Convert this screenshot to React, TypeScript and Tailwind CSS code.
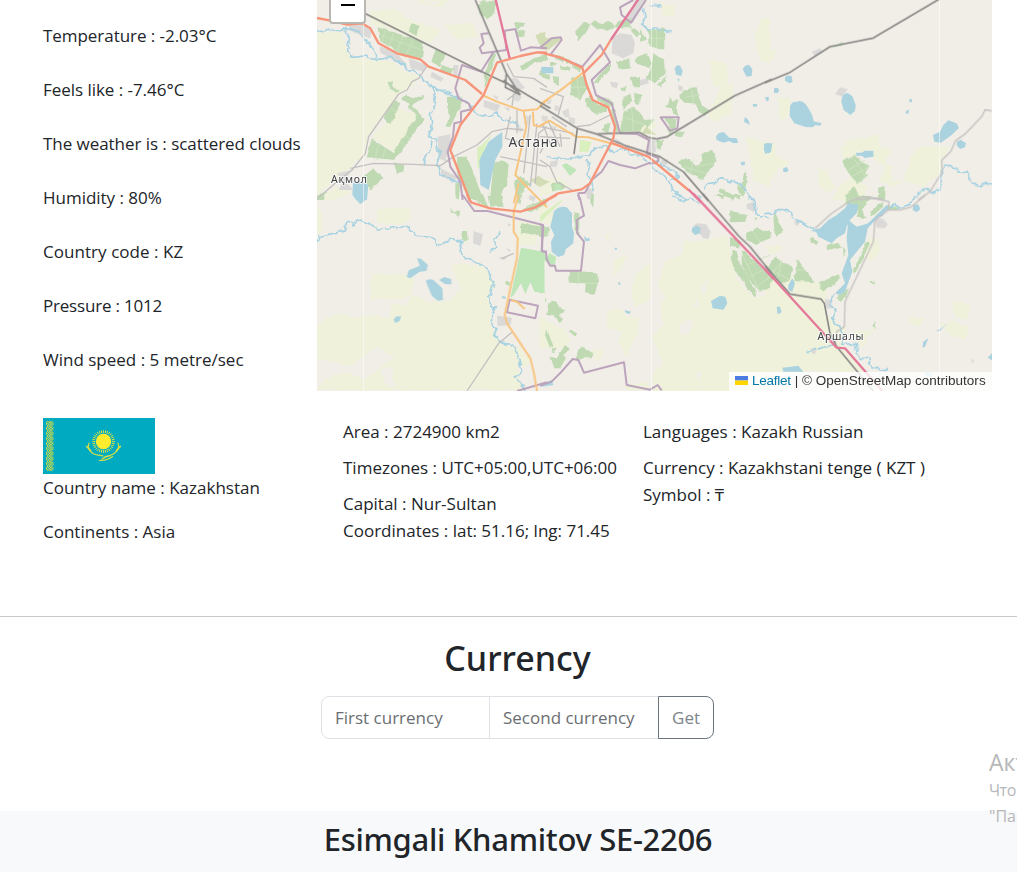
import React from "react";

type Shape = [tile: number, d: string];

// Each tile draws in its own 3x unit space, placed on the map by its origin.
const ORIGINS = [
  [317, 0],
  [540, 0],
  [765, 0],
  [317, 195],
  [540, 195],
  [765, 195],
];

const FARM: Shape[] = [
  [0, "M0 96L75 96 100 172 230 185 262 215 310 228 296 248 240 290 158 402 140 465 90 510 40 545 0 590Z"],
  [0, "M160 35L230 25 275 60 370 90 340 130 230 90 160 75ZM380 75L470 70 480 110 420 120ZM300 0H400L380 20 310 12ZM210 235L260 225 290 240 250 280 220 280Z"],
  [0, "M165 410L215 360 245 325 305 345 235 460Z"],
  [0, "M0 590L60 560 105 575 60 600H0Z"],
  [1, "M360 10L405 20 400 50 370 45ZM660 60L690 50V110H650ZM510 180L560 185 565 250 520 260ZM640 90L690 95V190L660 180ZM545 255L580 250 575 340 520 365 505 345ZM300 350L350 370 340 400 300 405ZM620 410L690 430V560L640 540ZM0 540L60 530 90 560 40 575 0 590Z"],
  [2, "M10 140L32 150 28 180 5 175ZM40 290L75 300 75 345 45 365ZM0 440L30 430 35 465 75 490 40 510 15 540 0 545ZM225 440L260 415 310 415 345 400 345 440 380 445 360 490 385 500 375 540 420 545 380 560 345 545 360 500 320 470 290 455 235 480ZM450 445L500 440 560 440 530 480 530 520 470 560 415 540ZM160 500L185 510 200 545 215 560 190 580 160 550ZM220 560L260 530 310 560 290 600H200Z"],
  [3, "M0 35L18 60 16 110 0 120ZM180 45L220 38 280 40 285 75 240 90 180 80ZM162 236L258 238 292 250 285 300 258 312 162 312Z"],
  [3, "M405 210L440 205 500 215 535 265 515 300 520 350 525 400 545 440 600 500 605 545 620 585H0L30 550 90 530 140 555 190 515 235 485 180 455 100 515 0 490V390L60 355 120 370 160 360 215 370 225 330 270 330 285 300 340 320 400 318 430 280Z"],
  [3, "M535 420L555 445 600 465 605 450 640 500 620 520 590 490 545 450ZM600 75L670 90 660 150 600 150Z"],
  [4, "M375 200L430 175 430 140 500 135 560 120 570 180 590 250 640 310 690 300V588H335L340 530 370 510 350 460 335 430 370 390 360 350 375 300 355 270Z"],
  [4, "M225 195L260 175 245 225 220 240ZM290 230L330 205 330 310 280 335 275 290ZM200 350L240 340 270 370 300 370 295 405 260 490 235 440 245 410 200 395ZM20 30L45 60 30 90 0 80V35ZM0 365L40 390 70 400 90 440 70 460 0 460ZM195 115L215 125 205 140ZM155 465L185 465 190 485 165 500ZM255 570L320 560 330 585H260Z"],
  [5, "M0 200L40 235 150 260 190 270 180 360 240 400 230 450 300 530H0ZM310 130L342 135 340 175 320 200 300 190ZM0 155L50 150 50 170 20 180ZM240 0H295L260 25 230 30ZM430 365L480 370 465 395 435 385ZM560 320L615 325 610 370 570 370ZM525 385L570 380 610 395 605 430 560 425ZM260 410L330 400 290 460Z"],
];
const LAND: Shape[] = [
  [3, "M190 525L215 515 230 525 225 555 240 570 225 580 205 560ZM90 515L140 495 175 520 140 550Z"],
  [4, "M420 395L445 370 460 380 450 415 425 420ZM465 340L475 325 470 310 460 330ZM480 280L505 245 495 300ZM465 540L485 530 480 560Z"],
  [0, "M320 0L370 5 355 15 325 10Z"],
];
const GREEN: Shape[] = [
  [0, "M182 82L320 125 315 178 268 170 188 122ZM282 68L308 78 298 105 275 98ZM355 148L385 160 370 200 343 185ZM375 195L410 208 400 225 368 212ZM215 250L228 242 225 262 248 272 240 282 215 265ZM232 300L250 310 240 330 235 350 220 372 200 352ZM268 280L285 295 320 285 322 292 280 318 253 298ZM300 345L308 338 323 355 240 472 228 462ZM280 316L308 340 300 348 272 322ZM165 418L240 465 235 480 148 472ZM170 505L200 535 160 570 138 530ZM230 490L260 495 262 515 240 520ZM0 590L30 575 20 600H0Z"],
  [0, "M485 10L540 0 535 40 510 58 490 42ZM590 65L625 70 600 95ZM595 95L625 92 620 110 600 112ZM390 290L430 290 435 320 420 340 400 380 385 380 400 345 390 320ZM530 150L540 165 515 225 500 225ZM420 470L450 470 500 600H455L420 520ZM530 490L555 478 575 490 570 560 545 590 520 590ZM590 540L610 525 640 550 600 600ZM610 200L640 178 690 165V180L650 190 615 212ZM490 0L510 2 500 20ZM415 550L430 548 425 600 415 588ZM500 225L520 230 505 262Z"],
  [1, "M105 95L135 62 150 75 140 95 115 125ZM152 72L165 60 182 72 208 62 225 75 245 60 272 55 275 85 245 85 225 78 200 92 170 88ZM280 80L300 100 290 112 273 92ZM325 88L373 82 373 145 340 145 325 130ZM230 185L268 175 270 205 238 210ZM300 90L320 120 300 125ZM290 172L320 158 335 185 328 205 288 190ZM340 160L372 180 375 220 345 250 320 235 335 200ZM93 235L130 230 145 265 120 300 92 280ZM138 300L150 290 175 312 205 310 200 335 172 342 140 322ZM160 245L210 190 210 210 175 250ZM165 285L215 300 238 385 228 398 212 320 172 300ZM272 230L300 230 300 262 280 262ZM250 290L272 282 276 305 250 330ZM282 275L308 285 295 312 285 305ZM248 335L285 318 320 365 300 392 240 395ZM318 360L340 358 325 382 308 370ZM240 265L260 260 255 275ZM350 255L365 240 380 225 378 240 362 258Z"],
  [1, "M372 352L412 355 410 380 395 395ZM435 268L470 265 485 318 510 330 490 348 460 310 430 308 420 285ZM375 320L385 312 390 290 398 305 415 295 410 320 418 345 400 345 390 325ZM412 490L438 475 470 498 490 485 487 465 515 450 530 480 487 540 440 515ZM540 565L590 590 580 600 535 575ZM595 550L602 565 612 520 622 515 618 560 610 590 595 580ZM190 370L212 370 205 400 188 390ZM350 420L370 420 365 450 350 445ZM100 182L128 200 122 215 100 205ZM0 210L30 225 28 240 0 228ZM35 228L60 232 55 255 38 248ZM50 165L70 170 66 185 45 178ZM75 174L98 182 95 194 78 188ZM30 185L48 190 42 200 30 198ZM60 195L95 205 90 215 62 208ZM380 385L400 390 390 405ZM405 395L435 395 425 412 408 408ZM35 550L60 545 80 560 40 575Z"],
  [2, "M235 485L268 465 312 500 300 520 310 525 275 552 248 515ZM245 580L268 560 285 590 305 600H242ZM340 562L362 562 360 600H338ZM195 135L235 130 235 138 200 142Z"],
  [3, "M470 0H500L515 40 475 15ZM515 0H560L558 35 520 35ZM612 85L678 95 675 125 612 112ZM398 35L412 50 430 50 425 65 402 52ZM435 108L450 108 452 135 440 140ZM565 258L580 258 578 272 565 270ZM600 0H615L610 30 600 20ZM618 42L665 20 690 10V28L640 52Z"],
  [4, "M90 228L172 232 174 265 162 300 138 295 140 265 87 263ZM100 52L118 55 118 120 108 115ZM0 90L28 100 25 120 0 125ZM25 325L45 318 60 335 78 345 55 355 70 375 65 383 40 360 18 362ZM20 400L40 455 30 458 15 420ZM90 405L112 415 105 425 88 415ZM105 490L125 455 160 475 155 490ZM75 450L90 462 70 480 78 490 60 520 40 520 28 485 50 490ZM150 0H162L160 38 152 25ZM15 310L22 315 15 325ZM35 460L50 458 40 475Z"],
  [4, "M570 45L585 50 620 60 620 80 572 82ZM618 115L650 97 690 110V130L645 148 620 135ZM570 125L605 140 600 160 570 155ZM575 165L590 165 600 205 650 290 645 308 605 255 580 215 572 190ZM605 165L690 240V275L660 290 630 255 605 210ZM645 68L655 68 652 78ZM520 0H560L548 12ZM580 0H602L595 15Z"],
  [5, "M30 50L55 110 30 125 25 70ZM0 115L20 115 15 130 0 135ZM30 185L82 215 75 255 50 265 30 245 0 280V230ZM95 192L108 210 150 262 88 258ZM158 265L185 255 220 238 228 250 175 290ZM135 125L160 140 155 150 137 142ZM185 150L220 140 228 155 190 165ZM250 0L320 0 300 30 290 50 305 70 275 65 275 30 240 25ZM320 45L355 20 355 35 320 65ZM305 140L315 145 270 238 265 225ZM240 285L252 280 245 300 225 325 215 308ZM235 155L242 165 235 187ZM370 30L402 40 395 45 370 45ZM310 262L330 260 328 268ZM330 380L333 375 328 398 320 395Z"],
];
const FIELD_LINES: Shape[] = [
  [0, "M205 90L195 125M230 98L215 140M258 106L240 155M290 115L265 170M190 105L315 150M185 430L175 472M205 445L195 478M215 320L238 335M265 440L250 420M280 420L262 402"],
  [1, "M110 230L118 300M92 262L145 262M440 290L480 285M455 268L460 310M430 500L500 520M460 480L450 520M470 500L520 490M325 115H373M350 85V145M250 350L315 375M275 320L280 395"],
  [2, "M250 510L300 480M260 530L312 500M270 480L300 530"],
  [4, "M620 210L690 180M630 245L690 215M645 280L690 245M610 185L660 290M640 110L660 140M115 230V265M140 265H174"],
  [5, "M0 260L50 200M20 225L75 255M50 195L40 245M90 225L120 225M245 15L300 10"],
];
const OLIVE: Shape[] = [
  [0, "M655 105L685 95V140L665 130ZM640 540L665 528 690 545 665 560Z"],
  [1, "M0 95L20 115 55 110 65 118 25 150 0 148ZM318 380L350 405 305 400ZM0 535L30 545 0 560Z"],
];
const BRIGHT: Shape[] = [
  [3, "M612 158L682 170 683 295 652 290 640 262 625 298 612 265 590 300 580 310Z"],
  [4, "M0 172L12 172 20 190 28 175 48 185 45 210 30 210 12 195 12 290 0 297Z"],
  [1, "M65 495L80 490 110 510 90 528ZM40 555L60 550 65 570 45 570Z"],
];
const PALE: Shape[] = [
  [0, "M480 445L500 430 525 402 505 440 490 500 482 505Z"],
  [1, "M120 420L155 425 145 455 118 455Z"],
  [4, "M0 62L60 18 70 15 0 82Z"],
];
const BUILT: Shape[] = [
  [0, "M92 70L145 72 163 95 160 115 130 105 100 92ZM188 138L240 160 270 195 230 180 190 158ZM275 175L330 195 320 215 280 205ZM345 215L380 235 372 245 340 230ZM362 410L400 403 400 450 385 475 400 490 365 475ZM370 505L420 530 412 545 375 530ZM80 540L110 570 65 570ZM408 195L425 195 420 235 410 230ZM500 300L550 315 540 335 500 320ZM575 235L600 235 625 265 600 270ZM60 520L105 510 80 545Z"],
  [1, "M218 112L240 100 275 105 285 130 280 160 250 175 215 160ZM285 0L318 0 278 70 262 55ZM210 245L235 248 230 265 215 260ZM300 240L325 235 325 250 300 258ZM415 255L430 260 425 275 415 270ZM326 415L345 420 348 455 322 465ZM365 480L385 478 380 495 360 495ZM140 560L160 570 155 600 140 595ZM225 415L250 430 230 435ZM30 485L55 480 50 500 30 500Z"],
  [2, "M225 262L248 267 232 290 210 282ZM140 155L165 145 172 155 150 168Z"],
  [3, "M470 108L498 118 490 153 468 145ZM540 362L585 368 580 390 542 393ZM568 160L582 165 575 170ZM548 185L572 188 560 195 548 192ZM638 0L658 5 650 20 635 12ZM570 85L582 88 575 95Z"],
  [4, "M472 85L498 88 512 110 505 132 490 130 460 92ZM620 28L640 20 650 45 640 50 620 40Z"],
  [5, "M330 68L355 72 368 88 358 100 335 98ZM180 312L202 315 198 340 182 340ZM135 462L155 462 150 478 138 472ZM88 75L102 78 100 92 90 90ZM618 492L628 495 622 506Z"],
];
const BLOCKS: Shape[] = [
  [1, "M20 300L35 298 32 312 20 312ZM45 315L60 320 55 335 42 330ZM65 335L85 325 90 350 75 352ZM85 350L105 355 105 372 88 368ZM5 345L25 350 20 365 5 362ZM30 375L50 380 45 395 30 392Z"],
  [0, "M590 280L615 290 605 305 590 300ZM620 345L640 350 635 375 622 370ZM600 380L618 385 610 400ZM560 320L580 325 575 335ZM525 285L545 290 540 300Z"],
];
const WATER: Shape[] = [
  [0, "M556 395L556 440 535 480 515 570 490 555 487 480 515 425ZM108 550Q125 535 154 555L150 600H118L106 585ZM672 203L690 200V220L675 218Z"],
  [1, "M5 200L40 202 40 220 5 220ZM404 205Q410 192 420 197L428 212 424 228 408 224ZM412 235L419 238 416 247ZM608 208Q615 193 627 195L637 206 635 228 620 230ZM528 410Q535 395 552 397L568 413 590 415 595 428 580 430 568 423 550 428 530 420ZM602 485L615 485 614 496 604 496ZM672 432L690 430V460L672 453ZM638 312L652 312 650 320 640 320ZM615 350L625 360 630 375 612 365ZM676 292L686 290V302L680 302Z"],
  [2, "M60 232Q65 223 80 228L83 246 73 250 60 242ZM27 265Q37 260 43 270L38 280 27 278ZM75 320Q80 303 95 306 108 298 122 313 145 345 146 364L170 370 166 377 150 375 144 382 122 381 88 370 74 348ZM229 305Q230 280 248 279L262 288 272 315 270 333 256 345 236 330ZM433 297L442 298 440 307 433 306ZM424 332L433 329 430 341 421 340ZM504 405L525 395 535 375 550 361 575 370 582 384 560 405 528 428 508 425ZM576 425L587 419 603 430 600 442 585 447 575 436ZM273 458L290 458 300 452 325 452 326 470 300 474 290 467 275 468ZM0 430L22 430 18 455 0 462ZM55 505L65 501 71 511 64 517 54 515ZM0 292L12 295 6 305Z"],
  [3, "M300 190L312 191 333 210 328 228 308 230 280 250 269 246 275 226 308 212ZM326 258Q335 248 350 256L376 280 378 315 362 317 345 303 335 280ZM366 255L382 246 402 252 404 268 385 268ZM236 365L252 363 248 378 235 384 230 374ZM110 0H148L146 15 130 28 118 15ZM556 302L566 305 565 312 556 310Z"],
  [4, "M42 48Q60 30 80 37L96 55 96 95 102 115 100 145 78 162 72 180 55 186 35 170 33 140 43 120 31 95ZM132 122L140 130 150 130 148 138 135 138ZM457 98Q470 88 482 98L480 115 465 120 455 110ZM513 318L540 302 556 305 562 325 550 344 518 340ZM253 345L273 350 268 357 258 354ZM224 158H231V164H224ZM235 262H241V269H235ZM0 570L35 555 40 570 5 575Z"],
  [5, "M150 103L165 100 190 75 215 60 240 40 250 25 280 28 275 55 255 75 245 95 240 115 215 130 200 145 160 125ZM250 75L275 95 310 85 365 30 370 35 308 100 300 140 275 170 255 195 262 230 240 290 225 300 210 295 240 265 230 235 250 180 245 130ZM70 270L82 250 90 265 82 290 70 285ZM35 335L45 335 50 352 38 358ZM445 30L460 28 466 42 455 52 443 45ZM52 518L100 512 115 530H55ZM475 440L490 430 480 455 472 458ZM512 408L530 400 550 382 525 408ZM668 488L681 475V496ZM478 530L500 533V545H485Z"],
];
const STREAMS: Shape[] = [
  [0, "M0 92L20 97 45 88 65 92 80 85 98 115 92 145 105 173 140 168 170 175 225 172 240 185 262 190 270 212 300 215 315 240 340 255 355 280 347 300 352 320 340 345 345 380 335 410 355 415 358 445 370 460 362 485 372 525 400 540 430 548M80 85L110 90 145 115 162 140 180 170M345 262L380 275 410 285 425 300 455 305 465 325 480 345 515 350 540 340 560 360 585 365 610 380M345 420L342 445 325 465 322 500"],
  [1, "M310 25L315 50 308 75 325 90 350 85 375 90 395 98M330 15L365 18M20 470L60 478 110 472 150 465 165 445 195 440 220 455 262 445 270 465 300 465 330 490 345 515 365 520 385 545 400 575 440 600M345 480L370 500 400 510 418 530 395 540M490 565L505 550 525 548 545 530 575 545 600 550 625 585 625 600M140 480L150 500 140 520 155 545 160 575"],
  [2, "M445 600L460 580 490 565 500 580 520 570 528 545 530 515 538 498 570 502 580 515 608 520 620 550 645 562 655 550 681 552"],
  [3, "M0 140L8 125 35 118 85 108 92 75 108 90 125 75 160 88 185 102 265 95 295 120 345 128 362 155 402 132 435 140 430 165 445 190 480 205 510 220 530 265 518 305 522 345 538 335 525 360 522 390 540 405 530 420 545 440 580 450 600 475 610 510 608 540 595 545 615 570 625 585M548 108L535 130 535 150 522 170"],
  [4, "M400 0L430 20 455 10 475 25 480 0M625 0L645 20 648 60 690 68"],
  [5, "M0 55L22 55 55 43 78 52 85 72 120 90 150 110M205 295L195 330 210 345 200 370 225 400 235 430 230 450 270 445 280 490 310 490 320 515 350 525 370 520M125 470L160 462 200 450M310 90L370 35 390 30 405 40 440 25 450 0"],
];
const MINOR: Shape[] = [
  [0, "M330 198L305 235 285 245 270 270 245 282 155 410 145 460 105 510 60 545 0 597M100 505L170 490 290 493 370 497 410 470 480 435 525 395 570 385 620 390M570 190L590 230 650 235 690 262M580 350L565 415 620 430M590 280L585 320M550 470L690 500M570 300L610 270M640 345L620 520M660 370L640 560M690 380L665 400 655 550M600 330L600 400"],
  [1, "M0 265L70 290 55 345M110 380L150 375 210 345M25 365L60 440M10 375L30 430M0 380L100 400M0 410L90 415M0 460L10 440M60 400L65 440M0 480L30 500 50 545 95 570M35 350L80 380"],
  [2, "M681 333L660 330 650 350 600 402 572 422 557 455 530 480 532 515 495 575 460 600M270 598L300 590 350 598"],
  [3, "M585 412L545 445 450 588M555 190L590 175"],
  [5, "M480 0L440 35 405 45 370 45 330 75 325 140 240 320 238 395 215 410 210 450M370 45L372 20 330 10 260 15 200 55 150 100"],
];
const PURPLE: Shape[] = [
  [0, "M690 145L640 142 612 152 595 87 563 92 568 150 530 155 495 160 488 143 500 130 493 102 515 100M530 155L492 215 435 195 415 265 425 295 455 310 462 328 432 335 432 365 412 370 408 410 392 455 400 500 430 545 437 600"],
  [1, "M0 143L35 115 62 112 65 120 32 163 127 200 150 172 180 135 210 187 155 240 168 285 215 310 240 400M280 0L240 22 245 45 273 68 318 0M362 352H416L412 385 390 392ZM240 400L292 402 327 420 320 460 357 475M357 475L350 490 325 490 285 505 240 495 205 483 185 515 155 540 135 578 115 580 118 600"],
  [3, "M437 0L472 48 512 48 678 90 675 168 690 170M578 314L663 332 655 370 570 352Z"],
  [4, "M0 88L8 92 5 168 18 172 20 192 30 212 45 212 48 227H123L132 140 112 115 110 75 132 62 120 10 113 0M0 572L35 560 60 535 98 492 115 495 132 533 252 502 260 570 330 584 353 570 365 586"],
  [3, "M600 588L690 562"],
];
const PRIMARY: Shape[] = [
  [0, "M495 285L540 305 615 332 660 328 690 300M620 335L628 380 595 525 690 622M648 335L650 375 665 380 690 365M605 550L590 610"],
  [1, "M0 313L60 272 130 218M0 378L28 362 108 410 145 412 250 440"],
  [3, "M605 0L590 50 590 110 602 130 600 190 580 280 563 360 570 385 640 490 650 530 660 588M582 316L600 320 623 342"],
];
const TRUNK: Shape[] = [
  [0, "M0 54L40 62 90 74 135 70 160 85 185 130 240 160 310 178 335 200 445 240 495 282M690 158L660 157 610 168 540 188 500 285 430 375 400 450 460 605"],
  [1, "M0 157L60 172 127 203 140 255 158 300 205 322 225 380 220 415 150 550 125 568 55 580 20 600M130 220L185 165 212 120M212 428L325 470 445 570"],
  [3, "M450 0L462 22 520 40 610 50 655 37 690 18"],
  [4, "M0 28L50 0"],
];
const PINK: Shape[] = [
  [0, "M535 -5L578 175"],
  [1, "M212 120L297 -5M445 568L482 605"],
  [4, "M460 -4L700 250"],
  [5, "M0 222L215 458 240 460 352 588"],
];
const RAIL: Shape[] = [
  [0, "M140 38L495 215 590 260 640 290 700 325M475 0L568 220 565 262 610 285M568 220L610 285M560 240L600 275"],
  [1, "M0 317L112 385 170 402 298 397 325 412 350 417 382 410 585 287 695 238M112 385L102 462M170 402L260 438 360 470 430 515 505 602"],
  [2, "M0 248L75 217 195 140 325 114 525 -4"],
  [4, "M488 -4L595 122 630 155 695 235"],
  [5, "M0 212L75 297 168 312 178 325 195 415 215 455 325 588"],
];

function Layer({ shapes, fill = "none", stroke, width }: { shapes: Shape[]; fill?: string; stroke?: string; width?: number }) {
  return (
    <>
      {shapes.map(([t, d], i) => (
        <path
          key={i}
          d={d}
          fill={fill}
          stroke={stroke}
          strokeWidth={width}
          strokeLinejoin="round"
          transform={`translate(${ORIGINS[t][0]} ${ORIGINS[t][1]}) scale(0.33333)`}
        />
      ))}
    </>
  );
}

function CityMap() {
  return (
    <svg className="block h-[391px] w-[675px]" viewBox="317 0 675 391" fontFamily='"Noto Sans", sans-serif'>
      <defs>
        <filter id="meander" filterUnits="userSpaceOnUse" x="317" y="0" width="675" height="391" colorInterpolationFilters="sRGB">
          <feTurbulence type="fractalNoise" baseFrequency="0.16" numOctaves="2" seed="4" result="n" />
          <feDisplacementMap in="SourceGraphic" in2="n" scale="6" xChannelSelector="R" yChannelSelector="G" />
        </filter>
        <filter id="rough" filterUnits="userSpaceOnUse" x="317" y="0" width="675" height="391" colorInterpolationFilters="sRGB">
          <feTurbulence type="fractalNoise" baseFrequency="0.12" numOctaves="2" seed="9" result="n" />
          <feDisplacementMap in="SourceGraphic" in2="n" scale="4" xChannelSelector="R" yChannelSelector="G" />
        </filter>
      </defs>
      <rect x="317" width="675" height="391" fill="#f1eee8" />
      <g filter="url(#rough)">
        <Layer shapes={FARM} fill="#eff1db" />
        <Layer shapes={LAND} fill="#f1eee8" />
      </g>
      <Layer shapes={OLIVE} fill="#d3ddb5" />
      <Layer shapes={BUILT} fill="#dad9d8" />
      <Layer shapes={BLOCKS} fill="#dddbd8" />
      <Layer shapes={PALE} fill="#d9efbe" />
      <g filter="url(#rough)">
        <Layer shapes={GREEN} fill="#bfdab2" />
      </g>
      <Layer shapes={FIELD_LINES} stroke="#cfe2c3" width={3} />
      <Layer shapes={BRIGHT} fill="#bfe6b8" />
      <Layer shapes={WATER} fill="#abd3df" />
      <g filter="url(#meander)">
        <Layer shapes={STREAMS} stroke="#a6d2e1" width={5} />
      </g>
      <Layer shapes={MINOR} stroke="#c3c0c0" width={4} />
      <Layer shapes={PURPLE} stroke="#bca4bd" strokeOpacity={1} width={6} />
      <Layer shapes={PRIMARY} stroke="#f8c580" width={6} />
      <Layer shapes={RAIL} stroke="#8b8a88" width={5} />
      <Layer shapes={TRUNK} stroke="#f69579" width={7} />
      <Layer shapes={PINK} stroke="#e4799a" width={7} />
      <path d="M363.5 0V391M651.5 0V391M939.5 0V391" stroke="#fff" strokeOpacity=".5" />
      <g fill="#3f4043" stroke="#fff" strokeOpacity=".7" strokeWidth="2" paintOrder="stroke" strokeLinejoin="round">
        <text x="508.5" y="147" fontSize="13.5" textLength="49">Астана</text>
        <text x="331" y="183" fontSize="10.5" textLength="36">Ақмол</text>
        <text x="817.5" y="340" fontSize="10.5" textLength="46">Аршалы</text>
      </g>
    </svg>
  );
}

function Flag() {
  const rays = Array.from({ length: 32 }, (_, i) => i * 11.25);
  return (
    <svg className="block h-14 w-28" viewBox="0 0 112 56">
      <rect width="112" height="56" fill="#00abc2" />
      <g fill="none" stroke="#c9d84a" strokeWidth="1">
        {[3, 8, 13, 18, 23, 28, 33, 38, 43, 48].map((y) => (
          <path key={y} d={`M4 ${y}l5.500 5M9.500 ${y}L4 ${y + 5}M6.700 ${y}l2 2.500-2 2.500-2-2.500zM3.700 ${y + 1}v3M9.900 ${y + 1}v3`} />
        ))}
      </g>
      <circle cx="60.5" cy="23.5" r="7.7" fill="#ffec2d" />
      {rays.map((a) => (
        <path key={a} d="M60.5 12.2v2.7" stroke="#e2e63a" strokeWidth=".9" transform={`rotate(${a} 60.5 23.5)`} />
      ))}
      <g fill="none" stroke="#d6df40" strokeLinecap="round">
        <path d="M46 25C44.500 29 46 33 50 35.500S58 37 60 38M75 25C76.500 29 75 33 71 35.500S63 38 59 41" strokeWidth="1.1" />
        <path d="M43.800 28.500L47.500 32.500M77.200 28.500L73.500 32.500" strokeWidth="1.800" />
        <path d="M56.500 42.300C61 43 66 41 69.500 38.500M62 38.500L66 38" strokeWidth="1.2" />
      </g>
    </svg>
  );
}

const weather: [string, string][] = [
  ["Temperature : -2.03°C", "tracking-[-0.05px]"],
  ["Feels like : -7.46°C", "tracking-[-0.04px]"],
  ["The weather is : scattered clouds", "tracking-[-0.05px]"],
  ["Humidity : 80%", "tracking-[-0.02px]"],
  ["Country code : KZ", "tracking-[0.05px]"],
  ["Pressure : 1012", "tracking-[-0.2px]"],
  ["Wind speed : 5 metre/sec", "tracking-[0px]"],
];

export default function App() {
  return (
    <div className="relative flex h-[872px] w-[1017px] flex-col overflow-hidden bg-white font-['Open_Sans','Noto_Sans',sans-serif] text-[17px] leading-[27px] whitespace-nowrap text-[#212529]">
      <section className="flex h-[391px] shrink-0">
        <div className="flex w-[317px] flex-col gap-[27px] pt-[22px] pl-[43px]">
          {weather.map(([text, tracking]) => (
            <p key={text} className={tracking}>{text}</p>
          ))}
        </div>
        <div className="relative h-[391px] w-[675px] overflow-hidden">
          <CityMap />
          <button className="absolute -top-[14px] left-[12px] flex h-[38px] w-[37px] items-center justify-center rounded-b border-2 border-[#b9b7b3] bg-white">
            <span className="h-[2px] w-[14px] bg-black" />
          </button>
          <div className="absolute right-0 bottom-0 flex h-[19px] w-[263px] items-center bg-white/80 pb-[2px] pl-[6px] font-['Liberation_Sans',sans-serif] text-[13.5px] leading-[17px] tracking-[0.01px] text-[#333]">
            <svg className="mr-[4px] h-[9px] w-[13px]" viewBox="0 0 12 8" preserveAspectRatio="none">
              <path fill="#4c7be1" d="M0 0h12v4H0z" />
              <path fill="#ffd500" d="M0 4h12v4H0z" />
            </svg>
            <span className="tracking-[-0.25px] text-[#0078a8]">Leaflet</span>
            <span className="ml-[4px]">| © OpenStreetMap contributors</span>
          </div>
        </div>
      </section>

      <section className="flex h-[225px] shrink-0 pt-[27px] pl-[43px]">
        <div className="w-[300px]">
          <Flag />
          <p>Country name : Kazakhstan</p>
          <p className="mt-[17px]">Continents : Asia</p>
        </div>
        <div className="w-[300px]">
          <p>Area : 2724900 km2</p>
          <p className="mt-[9px]">Timezones : UTC+05:00,UTC+06:00</p>
          <p className="mt-[9px]">Capital : Nur-Sultan</p>
          <p>Coordinates : lat: 51.16; lng: 71.45</p>
        </div>
        <div>
          <p>Languages : Kazakh Russian</p>
          <p className="mt-[9px]">Currency : Kazakhstani tenge ( KZT )</p>
          <p>Symbol : ₸</p>
        </div>
      </section>

      <section className="flex h-[195px] shrink-0 flex-col items-center border-t border-[#c8c9ca] pt-[20px] pl-[18px]">
        <h2 className="font-['Noto_Sans'] text-[34px] leading-[43px] font-medium">Currency</h2>
        <div className="mt-[16px] flex h-[43px]">
          <input className="w-[169px] rounded-l-lg border border-[#dee2e6] px-[13px] outline-none placeholder:text-[#6b6e71]" placeholder="First currency" />
          <input className="-ml-px w-[170px] border border-[#dee2e6] px-[13px] outline-none placeholder:text-[#6b6e71]" placeholder="Second currency" />
          <button className="-ml-px w-[56px] rounded-r-lg border border-[#6c757d] text-[#7d858c]">Get</button>
        </div>
      </section>

      <footer className="flex h-[61px] shrink-0 justify-center bg-[#f8f9fa] pt-[7px] pl-[19px]">
        <h2 className="font-['Noto_Sans'] text-[31px] leading-[43px] font-medium tracking-[-0.3px]">Esimgali Khamitov SE-2206</h2>
      </footer>

      <aside className="absolute top-[748px] left-[989px] w-[28px] overflow-hidden text-[#b6b7b8]">
        <p className="text-[23px] leading-[28px]">Акт</p>
        <p className="text-[16px] leading-[28px] tracking-[-0.5px]">Что</p>
        <p className="text-[16px] leading-[24px]">"Па</p>
      </aside>
    </div>
  );
}
